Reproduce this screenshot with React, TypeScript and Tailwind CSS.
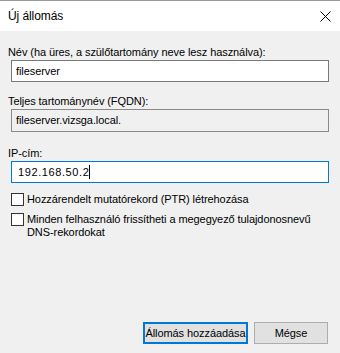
import React from "react";

// Új állomás párbeszédablak (DNS)
export default function App() {
  return (
    <div
      className="w-[340px] h-[353px] bg-[#f0f0f0] flex flex-col text-[11px] tracking-[-0.08px] text-black overflow-hidden whitespace-nowrap"
      style={{ fontFamily: '"Liberation Sans", Arial, sans-serif' }}
    >
      {/* címsor */}
      <div className="h-[31px] bg-white border-t border-[#9a9a9a] flex items-center justify-between pl-[8px] pr-[8px]">
        <span className="text-[12px]">Új állomás</span>
        <svg width="11" height="11" viewBox="0 0 11 11" className="mr-[1px]">
          <path d="M0.5 0.5 L10.5 10.5 M10.5 0.5 L0.5 10.5" stroke="#000" strokeWidth="1" />
        </svg>
      </div>

      <div className="flex flex-col px-[11px] pt-[13px] flex-1">
        <label className="leading-[16px] -ml-[3px]">Név (ha üres, a szülőtartomány neve lesz használva):</label>
        <div className="h-[22px] bg-white border border-[#7a7a7a] flex items-center px-[4px]">fileserver</div>

        <label className="leading-[16px] mt-[11px] -ml-[3px]">Teljes tartománynév (FQDN):</label>
        <div className="h-[23px] bg-[#f0f0f0] border border-[#8a8a8a] flex items-center px-[4px]">fileserver.vizsga.local.</div>

        <label className="leading-[16px] mt-[13px] -ml-[3px]">IP-cím:</label>
        <div className="h-[22px] bg-white border border-[#0078d7] flex items-center px-[6px]">
          <span className="tracking-[0.6px]">192.168.50.2</span>
          <span className="w-[1px] h-[14px] bg-black" />
        </div>

        <div className="flex items-start gap-[3px] mt-[10px]">
          <span className="w-[13px] h-[13px] bg-white border border-[#333] shrink-0" />
          <span className="leading-[13px]">Hozzárendelt mutatórekord (PTR) létrehozása</span>
        </div>
        <div className="flex items-start gap-[3px] mt-[7px]">
          <span className="w-[13px] h-[13px] bg-white border border-[#333] shrink-0" />
          <span className="leading-[13px]">
            Minden felhasználó frissítheti a megegyező tulajdonosnevű
            <br />
            DNS-rekordokat
          </span>
        </div>

        <div className="mt-auto mb-[9px] flex justify-end gap-[6px] mr-[1px]">
          <button className="w-[105px] h-[22px] bg-[#e1e1e1] border-2 border-[#0078d7] flex items-center justify-center">
            Állomás hozzáadása
          </button>
          <button className="w-[74px] h-[22px] bg-[#e1e1e1] border border-[#adadad] flex items-center justify-center">
            Mégse
          </button>
        </div>
      </div>
    </div>
  );
}
